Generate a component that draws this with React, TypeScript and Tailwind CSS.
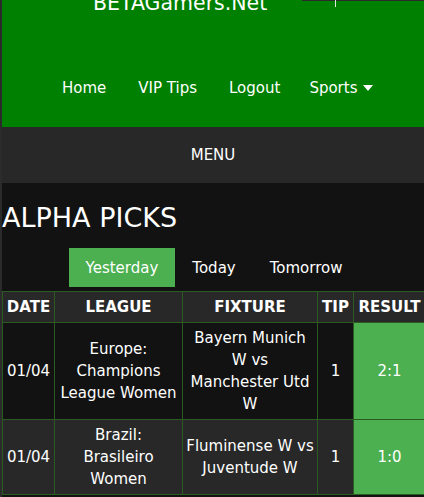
import type { JSX } from "react"

type Pick = {
    date: string
    league: string
    fixture: string
    tip: string
    result: string
}

const picks: Pick[] = [
    {
        date: "01/04",
        league: "Europe: Champions League Women",
        fixture: "Bayern Munich W vs Manchester Utd W",
        tip: "1",
        result: "2:1",
    },
    {
        date: "01/04",
        league: "Brazil: Brasileiro Women",
        fixture: "Fluminense W vs Juventude W",
        tip: "1",
        result: "1:0",
    },
]

const navLinks = ["Home", "VIP Tips", "Logout"]

function CaretDown() {
    return (
        <svg width="10" height="6" viewBox="0 0 10 6" className="ml-[6px]">
            <polygon points="0,0 10,0 5,6" fill="white" />
        </svg>
    )
}

export default function App(): JSX.Element {
    return (
        <div className="relative min-h-[497px] overflow-hidden border-l-2 border-[#2b2b2b] bg-[#121212] font-['DejaVu_Sans',sans-serif] text-white">
            {/* odd leftovers at the top edge */}
            <div className="absolute top-0 left-[300px] right-0 z-10 h-px bg-[#2b2b2b]" />
            <div className="absolute top-0 left-[333px] z-10 h-[7px] w-px bg-[#dfe9df]" />

            {/* Header */}
            <header className="flex h-[127px] flex-col bg-[#008000]">
                <div className="mt-[-7px] pl-[91px] text-[20.5px] leading-[20px]">BETAGamers.Net</div>
                <nav className="mt-[64px] flex items-center pl-[44px] text-[15px] leading-[22px]">
                    {navLinks.map((link) => (
                        <a key={link} className="px-4">
                            {link}
                        </a>
                    ))}
                    <a className="flex items-center pl-[13px]">
                        Sports
                        <CaretDown />
                    </a>
                </nav>
            </header>

            {/* Menu bar */}
            <div className="flex h-[56px] items-center justify-center bg-[#282828] text-[15px]">
                MENU
            </div>

            {/* Picks */}
            <h1 className="mt-[19px] text-[27px] leading-[32px]">ALPHA PICKS</h1>

            <div className="mt-[14px] flex justify-center pl-[2px] text-[15px] leading-[22px]">
                <button className="flex h-[39px] items-center bg-[#4caf50] px-[17px]">Yesterday</button>
                <button className="flex h-[39px] items-center px-[17px]">Today</button>
                <button className="flex h-[39px] items-center px-[17px]">Tomorrow</button>
            </div>

            <table className="mt-[4px] w-[423px] table-fixed border-collapse text-center text-[15px] leading-[22px]">
                <colgroup>
                    <col className="w-[52px]" />
                    <col className="w-[128px]" />
                    <col className="w-[135px]" />
                    <col className="w-[36px]" />
                    <col className="w-[72px]" />
                </colgroup>
                <thead>
                    <tr className="bg-[#282828]">
                        {["DATE", "LEAGUE", "FIXTURE", "TIP", "RESULT"].map((h) => (
                            <th
                                key={h}
                                className="border border-[#2b5a22] px-[3px] py-1 font-bold whitespace-nowrap"
                            >
                                {h}
                            </th>
                        ))}
                    </tr>
                </thead>
                <tbody>
                    {picks.map((pick, i) => (
                        <tr key={pick.fixture} className={i % 2 === 0 ? "bg-[#121212]" : "bg-[#282828]"}>
                            <td className="border border-[#2b5a22] px-[3px] py-1">{pick.date}</td>
                            <td className="border border-[#2b5a22] px-1 py-1">{pick.league}</td>
                            <td className="border border-[#2b5a22] px-[3px] py-1">{pick.fixture}</td>
                            <td className="border border-[#2b5a22] px-1 py-1">{pick.tip}</td>
                            <td className="border border-[#2b5a22] bg-[#4caf50] px-1 py-1">{pick.result}</td>
                        </tr>
                    ))}
                </tbody>
            </table>
        </div>
    )
}
